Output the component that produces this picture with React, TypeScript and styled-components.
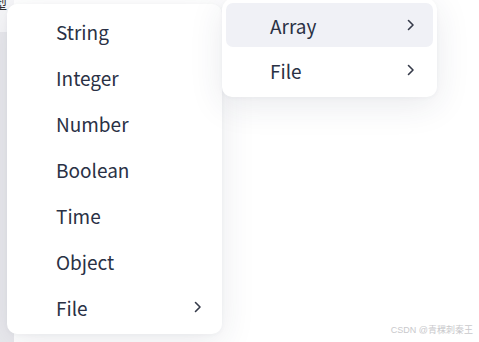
import React from 'react'
import styled, { createGlobalStyle } from 'styled-components'

const GlobalStyle = createGlobalStyle`
  html, body {
    margin: 0;
    padding: 0;
    background: #ffffff;
    font-family: "Noto Sans CJK SC", "Noto Sans", sans-serif;
  }
  #root {
    width: 479px;
    height: 342px;
    overflow: hidden;
  }
`;

const Page = styled.div`
  position: relative;
  width: 479px;
  height: 342px;
  display: flex;
  overflow: hidden;
  background: #ffffff;
`;

const SideStrip = styled.div`
  width: 14px;
  display: flex;
  flex-direction: column;
`;

const StripHead = styled.div`
  height: 35px;
  background: #f6f6f8;
  font-size: 13px;
  line-height: 13px;
  color: #333;
  overflow: hidden;
  margin-top: -3px;
  margin-left: -6px;
`;

const StripBody = styled.div`
  flex: 1;
  background: #e9e9ed;
`;

const Menu = styled.div<{ $left: number; $top: number }>`
  position: absolute;
  left: ${p => p.$left}px;
  top: ${p => p.$top}px;
  width: 215px;
  box-sizing: border-box;
  padding: 4px;
  background: #ffffff;
  border-radius: 10px;
  box-shadow: 0 8px 34px rgba(40, 45, 80, 0.1), 0 1px 4px rgba(40, 45, 80, 0.04);
  display: flex;
  flex-direction: column;
`;

const Item = styled.div<{ $active?: boolean; $h: number; $pl: number; $pr: number }>`
  height: ${p => p.$h}px;
  display: flex;
  align-items: center;
  justify-content: space-between;
  padding: 0 ${p => p.$pr}px 0 ${p => p.$pl}px;
  border-radius: 7px;
  background: ${p => (p.$active ? '#f0f1f6' : 'transparent')};
  color: #2a3145;
  font-size: 19px;
`;

const Label = styled.span`
  line-height: 1;
`;

const Watermark = styled.div`
  position: absolute;
  right: 6px;
  bottom: 6px;
  font-family: "Liberation Sans", "Noto Sans CJK SC", sans-serif;
  font-size: 9px;
  color: #c9c9cc;
`;

const Chevron = () => (
  <svg width="8" height="12" viewBox="0 0 8 12">
    <path d="M1.5 1.5 L6 6 L1.5 10.5" fill="none" stroke="#363b4a" strokeWidth="1.6" strokeLinecap="round" strokeLinejoin="round" />
  </svg>
)

const types = ['String', 'Integer', 'Number', 'Boolean', 'Time', 'Object']

export default function App() {
  return (
    <>
      <GlobalStyle />
      <Page>
        <SideStrip>
          <StripHead>型</StripHead>
          <StripBody />
        </SideStrip>

        <Menu $left={7} $top={4}>
          {types.map(t => (
            <Item key={t} $h={46} $pl={45} $pr={16}>
              <Label>{t}</Label>
            </Item>
          ))}
          <Item $h={46} $pl={45} $pr={16}>
            <Label>File</Label>
            <Chevron />
          </Item>
        </Menu>

        <Menu $left={222} $top={-1}>
          <Item $active $h={44} $pl={44} $pr={18}>
            <Label>Array</Label>
            <Chevron />
          </Item>
          <Item $h={46} $pl={44} $pr={18}>
            <Label>File</Label>
            <Chevron />
          </Item>
        </Menu>

        <Watermark>CSDN @青稞刺秦王</Watermark>
      </Page>
    </>
  )
}
